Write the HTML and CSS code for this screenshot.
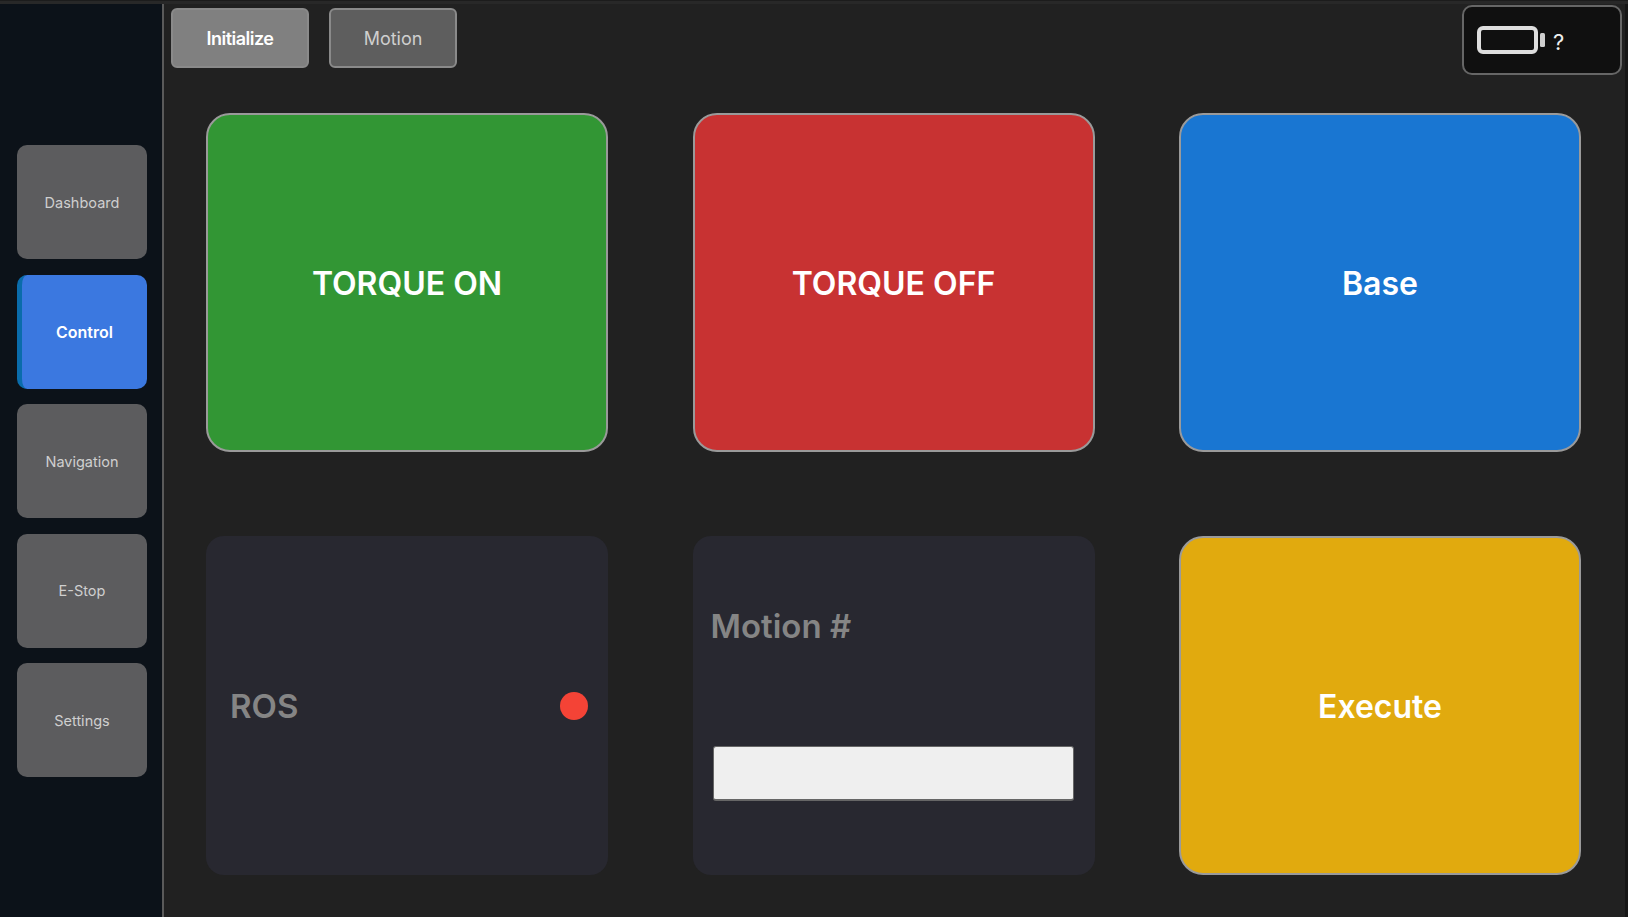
FILE: index.html
```html
<!DOCTYPE html>
<html>
<head>
	<meta http-equiv="Content-Type" content="text/html;charset=utf-8"/>
	<title>Control</title>
	<link rel="stylesheet" href="styles.css">
</head>
<body>
	<div class="strip"></div>
	<div class="app">
		<div class="sidebar">
			<a class="nav">Dashboard</a>
			<a class="nav on">Control</a>
			<a class="nav">Navigation</a>
			<a class="nav">E-Stop</a>
			<a class="nav">Settings</a>
		</div>
		<div class="main">
			<div class="topbar">
				<a class="tab on">Initialize</a>
				<a class="tab">Motion</a>
				<div class="battery">
					<svg class="battery-icon" width="69" height="28" viewBox="0 0 69 28">
						<rect x="2" y="2" width="57" height="24" rx="4" fill="none" stroke="#dedede" stroke-width="4"/>
						<rect x="63" y="7" width="5" height="14" rx="1.5" fill="#cfcfcf"/>
					</svg>
					<span class="battery-text">?</span>
				</div>
			</div>
			<div class="grid">
				<a class="card green">TORQUE ON</a>
				<a class="card red">TORQUE OFF</a>
				<a class="card blue">Base</a>
				<div class="panel ros">
					<span class="panel-label">ROS</span>
					<span class="dot"></span>
				</div>
				<div class="panel motion">
					<span class="panel-label">Motion #</span>
					<input class="motion-input" type="text">
				</div>
				<a class="card yellow">Execute</a>
			</div>
		</div>
	</div>
</body>
</html>
```

FILE: styles.css
```css
*{
	margin: 0;
	padding: 0;
	box-sizing: border-box;
	text-decoration: none;
}
html,body{
	height: 100%;
	overflow: hidden;
}
body{
	background: #212121;
	font-family: Inter, "Liberation Sans", sans-serif;
}
.strip{
	height: 4px;
	background: #282828;
	border-top: 1px solid #1c1c1c;
}
.app{
	display: flex;
	height: 913px;
}
.sidebar{
	width: 164px;
	flex: none;
	background: #0c1219;
	border-right: 2px solid #5a5a5a;
	padding: 141px 15px 0 17px;
	display: flex;
	flex-direction: column;
	gap: 15.5px;
}
.nav{
	height: 114px;
	border-radius: 10px;
	background: #5c5c5e;
	color: #cfcfcf;
	font-size: 14.5px;
	display: flex;
	align-items: center;
	justify-content: center;
}
.nav.on{
	background: #3b78e0;
	border-left: 5px solid #0a6cab;
	color: #fff;
	font-size: 16px;
	font-weight: 600;
}
.main{
	flex: 1;
	border-right: 3px solid #161616;
	padding: 0 0 0 7px;
}
.topbar{
	display: flex;
	align-items: flex-start;
	gap: 20px;
	padding: 4px 3px 0 0;
	height: 109px;
}
.tab{
	height: 60px;
	width: 138px;
	border: 2px solid #8a8a8a;
	border-radius: 6px;
	background: #808080;
	color: #fff;
	font-size: 18px;
	font-weight: 600;
	letter-spacing: -0.5px;
	display: flex;
	align-items: center;
	justify-content: center;
}
.tab + .tab{
	width: 128px;
	background: #5e5e5e;
	color: #cfcfcf;
	font-weight: 400;
	letter-spacing: 0;
}
.battery{
	margin-left: auto;
	margin-top: -3px;
	width: 160px;
	height: 70px;
	background: #101010;
	border: 2px solid #666;
	border-radius: 10px;
	display: flex;
	align-items: center;
	padding-left: 13px;
	gap: 7px;
}
.battery-icon{
	flex: none;
}
.battery-text{
	color: #eee;
	font-size: 22px;
	margin-top: 4px;
}
.grid{
	display: grid;
	grid-template-columns: repeat(3, 402px);
	grid-template-rows: repeat(2, 339px);
	column-gap: 84.5px;
	row-gap: 84px;
	padding-left: 35px;
}
.card{
	border: 2px solid #9a9a9a;
	border-radius: 24px;
	color: #fff;
	font-size: 32px;
	font-weight: 600;
	padding-top: 1px;
	display: flex;
	align-items: center;
	justify-content: center;
}
.green{
	background: #329634;
}
.red{
	background: #c83232;
}
.blue{
	background: #1976d2;
}
.yellow{
	background: #e1aa0e;
}
.panel{
	background: #282830;
	border-radius: 18px;
	color: #858585;
}
.panel-label{
	font-size: 33px;
	font-weight: 600;
}
.ros{
	display: flex;
	align-items: center;
	justify-content: space-between;
	padding: 0 20px 0 24px;
}
.dot{
	width: 28px;
	height: 28px;
	border-radius: 50%;
	background: #f44336;
}
.motion{
	display: flex;
	flex-direction: column;
	padding: 70px 21px 0 18px;
}
.motion-input{
	margin: 100px 0 0 2px;
	height: 55px;
	background: #efefef;
	border-width: 1px 1px 2px 1px;
	border-style: solid;
	border-color: #666;
	border-radius: 3px;
}
```
